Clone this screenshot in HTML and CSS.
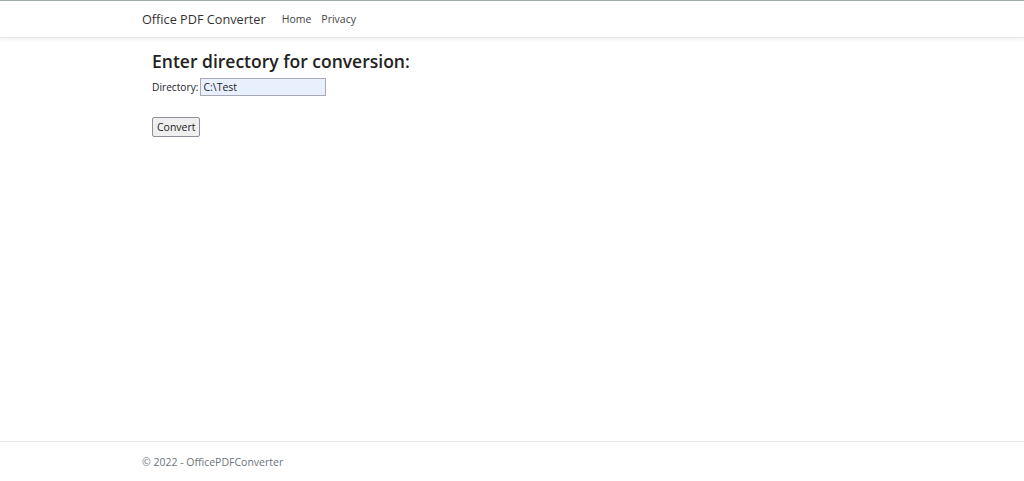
FILE: index.html
```html
<!DOCTYPE html>
<html lang="en">
<head>
    <meta charset="UTF-8">
    <meta name="viewport" content="width=device-width, initial-scale=1.0">
    <title>Office PDF Converter</title>
    <link rel="stylesheet" href="styles.css">
</head>
<body>
    <header class="navbar">
        <div class="container nav-inner">
            <a class="brand" href="#">Office PDF Converter</a>
            <nav class="nav-links">
                <a href="#">Home</a>
                <a href="#">Privacy</a>
            </nav>
        </div>
    </header>

    <main class="container main">
        <h2>Enter directory for conversion:</h2>
        <form class="convert-form">
            <div class="field">
                <label for="dir">Directory:</label>
                <input type="text" id="dir" name="dir" value="C:\Test">
            </div>
            <button type="submit">Convert</button>
        </form>
    </main>

    <footer class="footer">
        <div class="container">&copy; 2022 - OfficePDFConverter</div>
    </footer>
</body>
</html>
```

FILE: styles.css
```css
/* General */
html, body {
    height: 100%;
}

body {
    margin: 0;
    font-family: "Open Sans", "Noto Sans", sans-serif;
    color: #212529;
    background: #fff;
    display: flex;
    flex-direction: column;
    border-top: 1px solid #9fb0ab;
    box-sizing: border-box;
}

.container {
    width: 740px;
    margin: 0 auto;
    padding-left: 142px;
    padding-right: 142px;
    box-sizing: content-box;
}

a {
    text-decoration: none;
}

/* Navbar */
.navbar {
    height: 36px;
    border-bottom: 1px solid #e6e6e6;
    box-shadow: 0 2px 4px rgba(0, 0, 0, 0.05);
}

.nav-inner {
    display: flex;
    align-items: center;
    height: 100%;
}

.brand {
    color: #333;
    font-size: 12.7px;
    margin-right: 16px;
}

.nav-links {
    display: flex;
    align-items: center;
    gap: 10px;
}

.nav-links a {
    color: #444;
    font-size: 10.5px;
}

/* Main */
.main {
    flex: 1;
    padding-top: 11px;
}

.main > * {
    margin-left: 10px;
}

h2 {
    font-size: 17.5px;
    font-weight: 600;
    margin-top: 0;
    margin-bottom: 5px;
    color: #222;
}

.field {
    display: flex;
    align-items: center;
    font-size: 10.2px;
    margin-bottom: 18px;
}

.field label {
    margin-right: 2px;
}

input[type="text"] {
    width: 120px;
    height: 14px;
    padding: 1px 2px;
    border: 1px solid #a9a9b6;
    background: #e8f0fe;
    font-family: inherit;
    font-size: 10.5px;
    color: #222;
}

button {
    font-family: inherit;
    font-size: 10.5px;
    padding: 2px 4px;
    width: 48px;
    height: 20px;
    border: 1px solid #8f8f9d;
    border-radius: 2px;
    background: #efefef;
    color: #222;
}

/* Footer */
.footer {
    height: 39px;
    border-top: 1px solid #e6e6e6;
    display: flex;
    align-items: center;
    font-size: 10.5px;
    color: #6c757d;
}
```
